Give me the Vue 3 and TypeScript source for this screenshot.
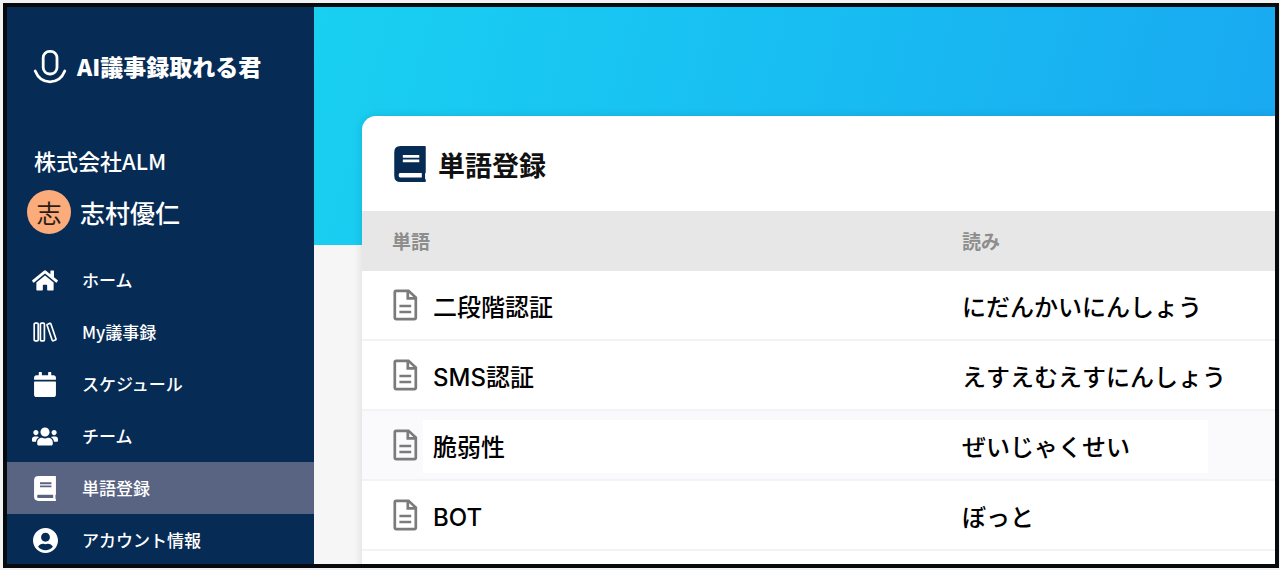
<script setup lang="ts">
interface NavItem {
  label: string
  viewBox: string
  width: number
  height: number
  path?: string
  active?: boolean
}

interface Word {
  word: string
  reading: string
  highlighted?: boolean
}

const bookPath =
  'M448 374V12q0-12-12-12H90Q0 0 0 90v332q0 90 90 90h346q12 0 12-12V480q0-10-10-16v-74q10-6 10-16zM122 128h234v40H122zm0 64h234v40H122zM84 384h308v64H84q-20 0-20-20v-24q0-20 20-20z'

const navItems: NavItem[] = [
  {
    label: 'ホーム',
    viewBox: '0 0 576 512',
    width: 26,
    height: 23,
    path: 'M280.37 148.26L96 300.11V464a16 16 0 0 0 16 16l112.06-.29a16 16 0 0 0 15.92-16V368a16 16 0 0 1 16-16h64a16 16 0 0 1 16 16v95.64a16 16 0 0 0 16 16.05L464 480a16 16 0 0 0 16-16V300L295.67 148.26a12.19 12.19 0 0 0-15.3 0zM571.6 251.47L488 182.56V44.05a12 12 0 0 0-12-12h-56a12 12 0 0 0-12 12v72.61L318.47 43a48 48 0 0 0-61 0L4.34 251.47a12 12 0 0 0-1.6 16.9l25.5 31A12 12 0 0 0 45.15 301l235.22-193.74a12.19 12.19 0 0 1 15.3 0L530.9 301a12 12 0 0 0 16.9-1.6l25.5-31a12 12 0 0 0-1.7-16.93z',
  },
  { label: 'My議事録', viewBox: '0 0 24 20', width: 24, height: 20 },
  {
    label: 'スケジュール',
    viewBox: '0 0 448 512',
    width: 22,
    height: 25,
    path: 'M12 192h424c6.6 0 12 5.4 12 12v260c0 26.5-21.5 48-48 48H48c-26.5 0-48-21.5-48-48V204c0-6.6 5.4-12 12-12zm436-44v-36c0-26.5-21.5-48-48-48h-48V12c0-6.6-5.4-12-12-12h-40c-6.6 0-12 5.4-12 12v52H160V12c0-6.6-5.4-12-12-12h-40c-6.6 0-12 5.4-12 12v52H48C21.5 64 0 85.5 0 112v36c0 6.6 5.4 12 12 12h424c6.6 0 12-5.4 12-12z',
  },
  {
    label: 'チーム',
    viewBox: '0 0 640 512',
    width: 26,
    height: 21,
    path: 'M96 224c35.3 0 64-28.7 64-64s-28.7-64-64-64-64 28.7-64 64 28.7 64 64 64zm448 0c35.3 0 64-28.7 64-64s-28.7-64-64-64-64 28.7-64 64 28.7 64 64 64zm32 32h-64c-17.6 0-33.5 7.1-45.1 18.6 40.3 22.1 68.9 62 75.1 109.4h66c17.7 0 32-14.3 32-32v-32c0-35.3-28.7-64-64-64zm-256 0c61.9 0 112-50.1 112-112S381.9 32 320 32 208 82.1 208 144s50.1 112 112 112zm76.8 32h-8.3c-20.8 10-43.9 16-68.5 16s-47.6-6-68.5-16h-8.3C179.6 288 128 339.6 128 403.2V432c0 26.5 21.5 48 48 48h288c26.5 0 48-21.5 48-48v-28.8c0-63.6-51.6-115.2-115.2-115.2zm-223.7-13.4C161.5 263.1 145.6 256 128 256H64c-35.3 0-64 28.7-64 64v32c0 17.7 14.3 32 32 32h65.9c6.3-47.4 34.9-87.3 75.2-109.4z',
  },
  { label: '単語登録', viewBox: '0 0 448 512', width: 22, height: 25, path: bookPath, active: true },
  {
    label: 'アカウント情報',
    viewBox: '0 8 496 496',
    width: 25,
    height: 25,
    path: 'M248 8C111 8 0 119 0 256s111 248 248 248 248-111 248-248S385 8 248 8zm0 96c48.6 0 88 39.4 88 88s-39.4 88-88 88-88-39.4-88-88 39.4-88 88-88zm0 344c-58.7 0-111.3-26.6-146.5-68.2 18.8-35.4 55.6-59.8 98.5-59.8 2.4 0 4.8.4 7.1 1.1 13 4.2 26.6 6.9 40.9 6.9 14.3 0 28-2.7 40.9-6.9 2.3-.7 4.7-1.1 7.1-1.1 42.9 0 79.7 24.4 98.5 59.8C359.3 421.4 306.7 448 248 448z',
  },
]

const words: Word[] = [
  { word: '二段階認証', reading: 'にだんかいにんしょう' },
  { word: 'SMS認証', reading: 'えすえむえすにんしょう' },
  { word: '脆弱性', reading: 'ぜいじゃくせい', highlighted: true },
  { word: 'BOT', reading: 'ぼっと' },
]
</script>

<template>
  <div class="page">
    <div class="frame">
      <aside class="sidebar">
        <div class="brand">
          <svg class="brand-icon" width="34" height="36" viewBox="0 0 34 36" aria-hidden="true">
            <rect x="10.2" y="2.4" width="13.8" height="22.6" rx="6.4" />
            <path d="M2.2 22C5 28.8 10.5 32.8 17 32.8S29 28.8 31.8 22" />
          </svg>
          <span class="brand-name">AI議事録取れる君</span>
        </div>
        <div class="company">株式会社ALM</div>
        <div class="user">
          <span class="avatar">志</span>
          <span class="user-name">志村優仁</span>
        </div>
        <nav class="nav">
          <a
            v-for="item in navItems"
            :key="item.label"
            href="#"
            class="nav-link"
            :class="{ active: item.active }"
          >
            <span class="nav-icon">
              <svg :width="item.width" :height="item.height" :viewBox="item.viewBox" aria-hidden="true">
                <path v-if="item.path" :d="item.path" fill="currentColor" fill-rule="evenodd" />
                <g v-else fill="none" stroke="currentColor" stroke-width="1.7">
                  <rect x="1.2" y="1.2" width="4" height="17.6" rx="1" />
                  <rect x="7.4" y="1.2" width="4" height="17.6" rx="1" />
                  <path d="M14.7 2.2l2-.8q.9-.3 1.2.6l5 14.8q.3.9-.6 1.2l-2 .7q-.9.3-1.2-.6l-5-14.8q-.3-.8.6-1.1z" />
                </g>
              </svg>
            </span>
            <span class="nav-label">{{ item.label }}</span>
          </a>
        </nav>
      </aside>

      <main class="main">
        <section class="card">
          <header class="card-header">
            <svg width="32" height="36" viewBox="0 0 448 512" aria-hidden="true">
              <path :d="bookPath" fill="#062b55" fill-rule="evenodd" />
            </svg>
            <h1>単語登録</h1>
          </header>
          <table class="words">
            <thead>
              <tr>
                <th scope="col" class="word-col">単語</th>
                <th scope="col">読み</th>
              </tr>
            </thead>
            <tbody>
              <tr v-for="row in words" :key="row.word" :class="{ highlighted: row.highlighted }">
                <td>
                  <div class="word">
                    <svg width="26" height="32" viewBox="-1 0 26 32" aria-hidden="true">
                      <g fill="none" stroke="#7b7b7b" stroke-width="2.7">
                        <path d="M3.2 1.8H15.5L22.8 8.5V28.6Q22.8 30.2 21.2 30.2H3.4Q1.8 30.2 1.8 28.6V3.2Q1.8 1.8 3.2 1.8Z" />
                        <path d="M14.8 2V9.4H22.4" />
                        <path d="M6.4 17H18.2M6.4 23H18.2" />
                      </g>
                    </svg>
                    <span class="text">{{ row.word }}</span>
                  </div>
                </td>
                <td class="text">{{ row.reading }}</td>
              </tr>
            </tbody>
          </table>
        </section>
      </main>
    </div>
  </div>
</template>

<style>
body {
  margin: 0;
  background: #fff;
}
</style>

<style scoped>
.page {
  box-sizing: border-box;
  height: 100vh;
  padding: 3px 1px 2px 3px;
  background: #f2f2f2;
  font-family: "Noto Sans CJK JP", "Noto Sans", sans-serif;
}

.frame {
  box-sizing: border-box;
  display: flex;
  height: 100%;
  border: 4px solid #060a0d;
  overflow: hidden;
}

.sidebar {
  flex: 0 0 307px;
  background: #062b55;
  color: #fff;
}

.brand {
  display: flex;
  align-items: center;
  gap: 10px;
  height: 120px;
  padding-left: 26px;
}

.brand-icon {
  fill: none;
  stroke: #fff;
  stroke-width: 2.8;
  stroke-linecap: round;
}

.brand-name {
  padding-bottom: 2px;
  font-size: 23px;
  font-weight: 900;
  line-height: 32px;
}

.company {
  padding: 17px 0 0 27px;
  font-size: 22px;
  font-weight: 500;
  line-height: 32px;
}

.user {
  display: flex;
  align-items: center;
  gap: 9px;
  padding: 14px 0 20px 20px;
  font-size: 25px;
  line-height: 44px;
}

.avatar {
  width: 44px;
  height: 44px;
  border-radius: 50%;
  background: #fcab7b;
  color: #2b1d15;
  text-align: center;
}

.user-name {
  font-weight: 500;
}

.nav-link {
  display: flex;
  align-items: center;
  gap: 24px;
  height: 52px;
  padding-left: 25px;
  color: #fff;
  font-size: 17px;
  font-weight: 500;
  text-decoration: none;
}

.nav-link.active {
  background: #596483;
}

.nav-icon {
  display: flex;
  justify-content: center;
  width: 26px;
}

.nav-label {
  padding-bottom: 2px;
}

.main {
  flex: 1;
  min-width: 0;
  background:
    linear-gradient(105deg, #19d0f1 0%, #18bdf2 50%, #19a8f1 100%) 0 0 / 100% 238px no-repeat,
    #f6f6f7;
}

.card {
  height: 100%;
  margin: 109px 0 0 48px;
  border-radius: 14px 0 0 0;
  background: #fff;
  box-shadow: 0 0 10px rgba(0, 0, 0, 0.12);
  overflow: hidden;
}

.card-header {
  display: flex;
  align-items: center;
  gap: 12px;
  height: 95px;
  padding-left: 32px;
}

.card-header h1 {
  margin: 0;
  padding-top: 2px;
  color: #111;
  font-size: 27px;
  font-weight: 700;
  line-height: 40px;
}

.words {
  width: 100%;
  border-collapse: separate;
  border-spacing: 0;
  table-layout: fixed;
}

.words th {
  box-sizing: border-box;
  height: 60px;
  padding: 0 0 2px 30px;
  background: #e7e7e7;
  color: #8d8d8d;
  font-size: 19px;
  font-weight: 700;
  text-align: left;
}

.words .word-col {
  width: 570px;
}

.words td {
  box-sizing: border-box;
  height: 70px;
  padding: 0 0 0 30px;
  border-bottom: 2px solid #f2f3f6;
  color: #000;
  font-family: Inter, "Noto Sans CJK JP", sans-serif;
  font-size: 24px;
  font-weight: 500;
  line-height: 36px;
}

.words .text {
  padding-top: 6px;
}

.words tr.highlighted {
  background:
    linear-gradient(#fff, #fff) 61px 9px / calc(100% - 128px) 53px no-repeat,
    #fafafc;
}

.word {
  display: flex;
  align-items: center;
  gap: 15px;
}
</style>
